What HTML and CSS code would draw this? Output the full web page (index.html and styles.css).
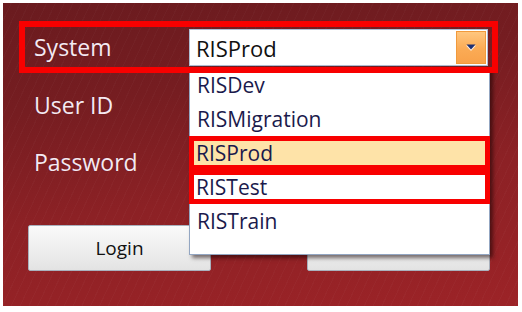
FILE: index.html
```html
<!DOCTYPE html>
<html>
<head>
<meta charset="utf-8">
<link rel="stylesheet" href="styles.css">
</head>
<body>
<div class="panel">
  <div class="form">
    <div class="row system">
      <span class="label">System</span>
      <div class="combo">
        <span class="value">RISProd</span>
        <span class="drop-btn">
          <svg width="12" height="8" viewBox="0 0 12 8"><path d="M1 1.5h10L6 7z" fill="#fff" opacity=".8"/><path d="M1.5 0.5h9L6 5.5z" fill="#1c2f74"/></svg>
        </span>
      </div>
    </div>
    <div class="row field"><span class="label">User ID</span></div>
    <div class="row field"><span class="label">Password</span></div>
    <div class="buttons">
      <button class="btn">Login</button>
      <button class="btn">Cancel</button>
    </div>
  </div>
  <ul class="list">
    <li class="item">RISDev</li>
    <li class="item">RISMigration</li>
    <li class="item selected marked">RISProd</li>
    <li class="item marked">RISTest</li>
    <li class="item">RISTrain</li>
  </ul>
</div>
</body>
</html>
```
FILE: styles.css
```css
* { box-sizing: border-box; }
html, body { margin: 0; padding: 0; background: #fff; }
body { font-family: "Open Sans", "Liberation Sans", sans-serif; }

.panel {
  position: relative;
  margin: 3px 0 0 3px;
  width: 515px;
  height: 303px;
  overflow: hidden;
  background:
    repeating-linear-gradient(115deg, rgba(255,255,255,0) 0 7px, rgba(255,255,255,0.025) 7px 8px),
    linear-gradient(172deg, #6a1b1f 0%, #761d21 30%, #8c2125 60%, #9c2327 100%);
}

.form {
  padding: 18px 20px 0 16px;
}

.row {
  display: flex;
  align-items: center;
}

.system {
  position: relative;
  width: 479px;
  height: 52px;
  padding: 6px;
}
.system::after {
  content: "";
  position: absolute;
  inset: 0;
  border: 6px solid #f80000;
  z-index: 3;
  pointer-events: none;
}

.label {
  color: #f5e9f1;
  font-size: 23px;
  line-height: 30px;
  text-shadow: 0 0 1px rgba(80,20,40,0.6);
  padding-left: 9px;
}
.field .label {
  padding-left: 15px;
}
.system .label {
  width: 164px;
  flex: none;
}

.combo {
  align-self: flex-start;
  margin-top: 2px;
  width: 299px;
  height: 37px;
  border: 1px solid #aebdd3;
  background: #fff;
  display: flex;
  align-items: center;
  justify-content: space-between;
  padding: 1px 1px 1px 6px;
}
.value {
  font-size: 22px;
  line-height: 30px;
  color: #111;
}
.drop-btn {
  width: 30px;
  height: 33px;
  align-self: flex-end;
  border: 1px solid #f19a3c;
  background: linear-gradient(#ffc67e, #fbab55 55%, #f9a24a);
  display: flex;
  align-items: center;
  justify-content: center;
}

.field {
  height: 57px;
}
.system + .field { margin-top: 3px; }

.buttons {
  display: flex;
  gap: 96px;
  margin: 35px 0 0 9px;
}
.btn {
  width: 183px;
  height: 46px;
  border: 1px solid #a9b1bd;
  border-radius: 2px;
  background: linear-gradient(#fafafa, #efefef 50%, #e3e3e3);
  font-family: "Open Sans", "Liberation Sans", sans-serif;
  font-size: 19px;
  color: #111;
  padding: 0;
}

.list {
  position: absolute;
  left: 186px;
  top: 64px;
  width: 301px;
  height: 188px;
  margin: 0;
  padding: 0;
  list-style: none;
  background: #fff;
  border: 1px solid #93a6c2;
  box-shadow: 3px 3px 4px rgba(20,0,0,0.55);
  z-index: 1;
}
.item {
  height: 34px;
  display: flex;
  align-items: center;
  padding-left: 7px;
  font-size: 21px;
  color: #1b1a4c;
}
.item.marked {
  border: 5px solid #f80000;
  padding-left: 2px;
  margin: 0 -1px;
}
.item.selected {
  background: #fee3a8;
}
```
